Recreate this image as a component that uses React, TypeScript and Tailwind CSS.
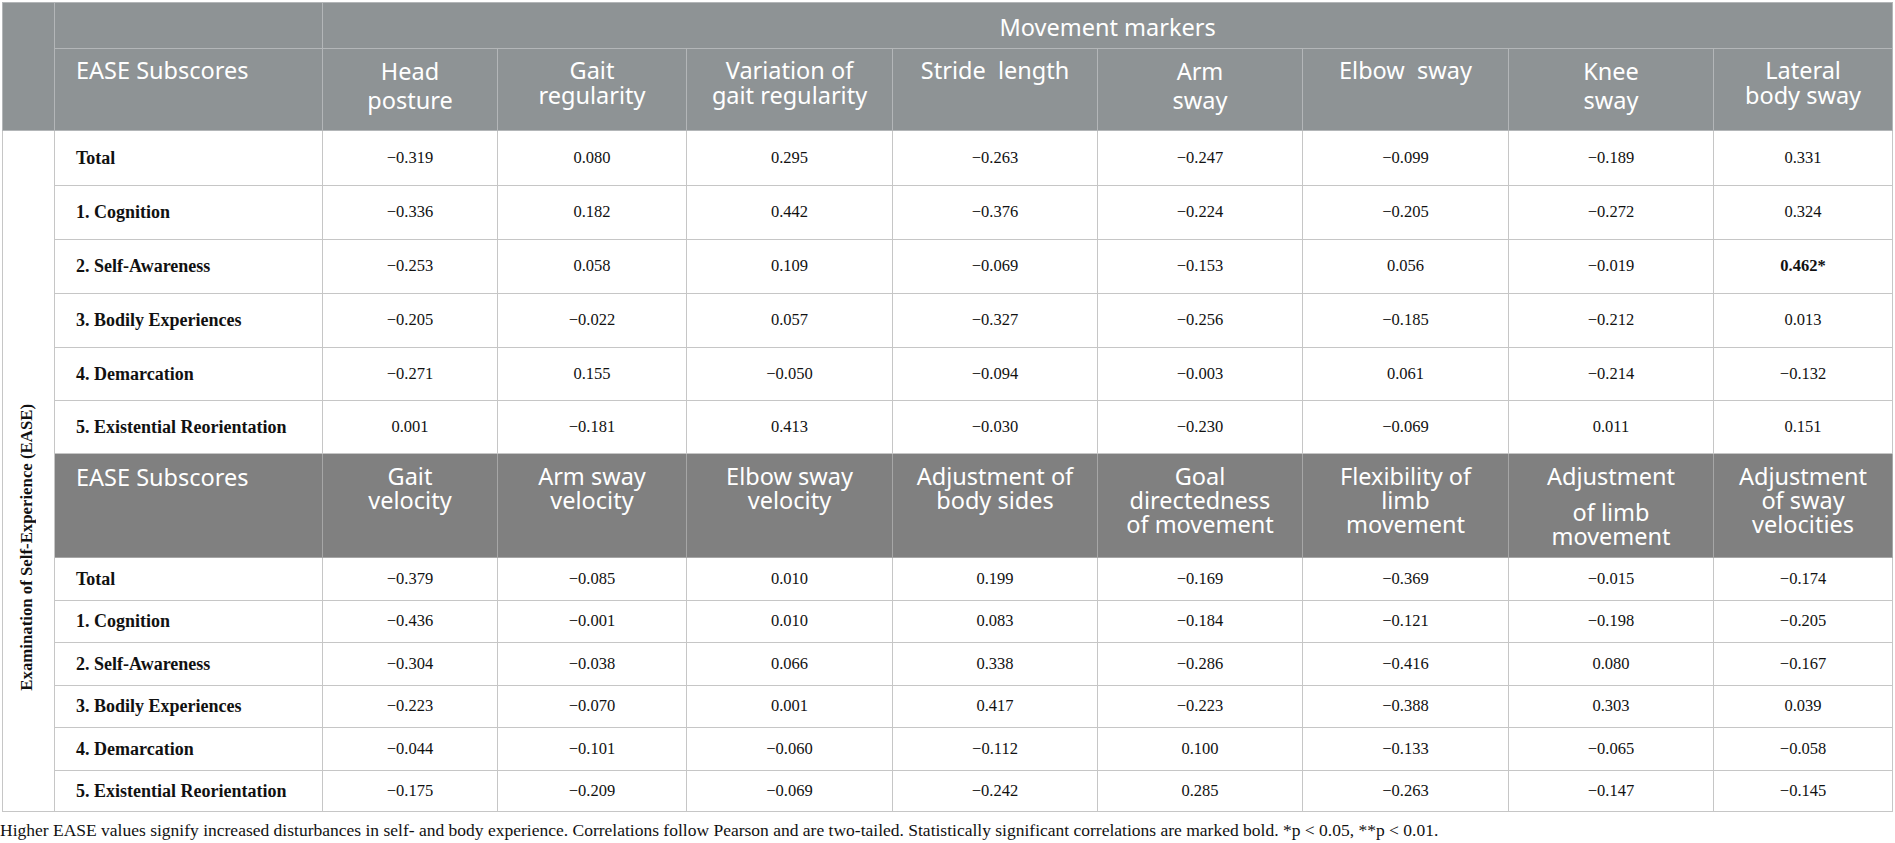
const topHeaders = [
  { lines: ["Head", "posture"], tall: true },
  { lines: ["Gait", "regularity"] },
  { lines: ["Variation of", "gait regularity"] },
  { lines: ["Stride\u00a0 length"] },
  { lines: ["Arm", "sway"], tall: true },
  { lines: ["Elbow\u00a0 sway"] },
  { lines: ["Knee", "sway"], tall: true },
  { lines: ["Lateral", "body sway"] },
];

const bottomHeaders = [
  ["Gait", "velocity"],
  ["Arm sway", "velocity"],
  ["Elbow sway", "velocity"],
  ["Adjustment of", "body sides"],
  ["Goal", "directedness", "of movement"],
  ["Flexibility of", "limb", "movement"],
  ["Adjustment", "of limb", "movement"],
  ["Adjustment", "of sway", "velocities"],
];

const labels = [
  "Total",
  "1. Cognition",
  "2. Self-Awareness",
  "3. Bodily Experiences",
  "4. Demarcation",
  "5. Existential Reorientation",
];

const topRows = [
  ["−0.319", "0.080", "0.295", "−0.263", "−0.247", "−0.099", "−0.189", "0.331"],
  ["−0.336", "0.182", "0.442", "−0.376", "−0.224", "−0.205", "−0.272", "0.324"],
  ["−0.253", "0.058", "0.109", "−0.069", "−0.153", "0.056", "−0.019", "0.462*"],
  ["−0.205", "−0.022", "0.057", "−0.327", "−0.256", "−0.185", "−0.212", "0.013"],
  ["−0.271", "0.155", "−0.050", "−0.094", "−0.003", "0.061", "−0.214", "−0.132"],
  ["0.001", "−0.181", "0.413", "−0.030", "−0.230", "−0.069", "0.011", "0.151"],
];

const bottomRows = [
  ["−0.379", "−0.085", "0.010", "0.199", "−0.169", "−0.369", "−0.015", "−0.174"],
  ["−0.436", "−0.001", "0.010", "0.083", "−0.184", "−0.121", "−0.198", "−0.205"],
  ["−0.304", "−0.038", "0.066", "0.338", "−0.286", "−0.416", "0.080", "−0.167"],
  ["−0.223", "−0.070", "0.001", "0.417", "−0.223", "−0.388", "0.303", "0.039"],
  ["−0.044", "−0.101", "−0.060", "−0.112", "0.100", "−0.133", "−0.065", "−0.058"],
  ["−0.175", "−0.209", "−0.069", "−0.242", "0.285", "−0.263", "−0.147", "−0.145"],
];

const topHeights = ["h-[55px]", "h-[54px]", "h-[54px]", "h-[54px]", "h-[53px]", "h-[53px]"];
const bottomHeights = ["h-[43px]", "h-[42px]", "h-[43px]", "h-[42px]", "h-[43px]", "h-[41px]"];

const colWidths = [
  "w-[52px]",
  "w-[268px]",
  "w-[175px]",
  "w-[189px]",
  "w-[206px]",
  "w-[205px]",
  "w-[205px]",
  "w-[206px]",
  "w-[205px]",
  "w-[179px]",
];

const sans = "font-['Noto_Sans','Open_Sans',sans-serif] text-[23.5px] text-white font-normal";
const serif = "font-['Liberation_Serif','Times_New_Roman',serif] text-[#111]";
const head1 = "bg-[#8e9395] border border-[#b3b6b8]";
const head2 = "bg-[#808080] border border-[#a6a6a6]";
const body = "border border-[#c6c6c6]";
const labelCell = `${body} ${serif} text-[18px] font-bold pl-[21px] align-middle whitespace-nowrap`;
const numCell = `${body} ${serif} text-[16.5px] text-center align-middle`;

function Cells({ row }: { row: string[] }) {
  return (
    <>
      {row.map((v, j) => (
        <td key={j} className={`${numCell} ${v.endsWith("*") ? "font-bold" : ""}`}>
          {v}
        </td>
      ))}
    </>
  );
}

export default function App() {
  return (
    <div className="bg-white w-[1895px] h-[843px] pt-[2px] pl-[2px]">
      <table className="table-fixed border-collapse w-[1890px] border border-[#c6c6c6]">
        <colgroup>
          {colWidths.map((w, i) => (
            <col key={i} className={w} />
          ))}
        </colgroup>
        <tbody>
          <tr className="h-[46px]">
            <td rowSpan={2} className={head1} />
            <td className={head1} />
            <td colSpan={8} className={`${head1} ${sans} text-center leading-[25px] align-middle pt-[3px]`}>
              Movement markers
            </td>
          </tr>
          <tr className="h-[82px]">
            <td className={`${head1} ${sans} leading-[25px] align-top pt-[9px] pl-[21px]`}>EASE Subscores</td>
            {topHeaders.map((h, i) => (
              <td
                key={i}
                className={`${head1} ${sans} text-center align-top ${h.tall ? "leading-[29px] pt-[8px]" : "leading-[25px] pt-[9px]"}`}
              >
                {h.lines.map((l, k) => (
                  <div key={k}>{l}</div>
                ))}
              </td>
            ))}
          </tr>
          {topRows.map((row, i) => (
            <tr key={i} className={topHeights[i]}>
              {i === 0 && (
                <td rowSpan={13} className={`${body} align-bottom pb-[120px]`}>
                  <div className="flex justify-center pr-[3px]">
                    <div
                      className={`${serif} text-[16.8px] font-bold [writing-mode:vertical-rl] rotate-180 leading-[20px] whitespace-nowrap`}
                    >
                      Examination of Self-Experience (EASE)
                    </div>
                  </div>
                </td>
              )}
              <td className={labelCell}>{labels[i]}</td>
              <Cells row={row} />
            </tr>
          ))}
          <tr className="h-[104px]">
            <td className={`${head2} ${sans} leading-[25px] align-top pt-[11px] pl-[21px]`}>EASE Subscores</td>
            {bottomHeaders.map((lines, i) => (
              <td key={i} className={`${head2} ${sans} text-center align-top pt-[10px] leading-[24px]`}>
                {lines.map((l, k) => (
                  <div key={k} className={i === 6 && k === 0 ? "mb-[12px]" : ""}>
                    {l}
                  </div>
                ))}
              </td>
            ))}
          </tr>
          {bottomRows.map((row, i) => (
            <tr key={i} className={bottomHeights[i]}>
              <td className={labelCell}>{labels[i]}</td>
              <Cells row={row} />
            </tr>
          ))}
        </tbody>
      </table>
      <p className={`${serif} text-[17.5px] leading-[20px] mt-[8px] -ml-[2px] whitespace-nowrap`}>
        Higher EASE values signify increased disturbances in self- and body experience. Correlations follow Pearson
        and are two-tailed. Statistically significant correlations are marked bold. *p &lt; 0.05, **p &lt; 0.01.
      </p>
    </div>
  );
}
